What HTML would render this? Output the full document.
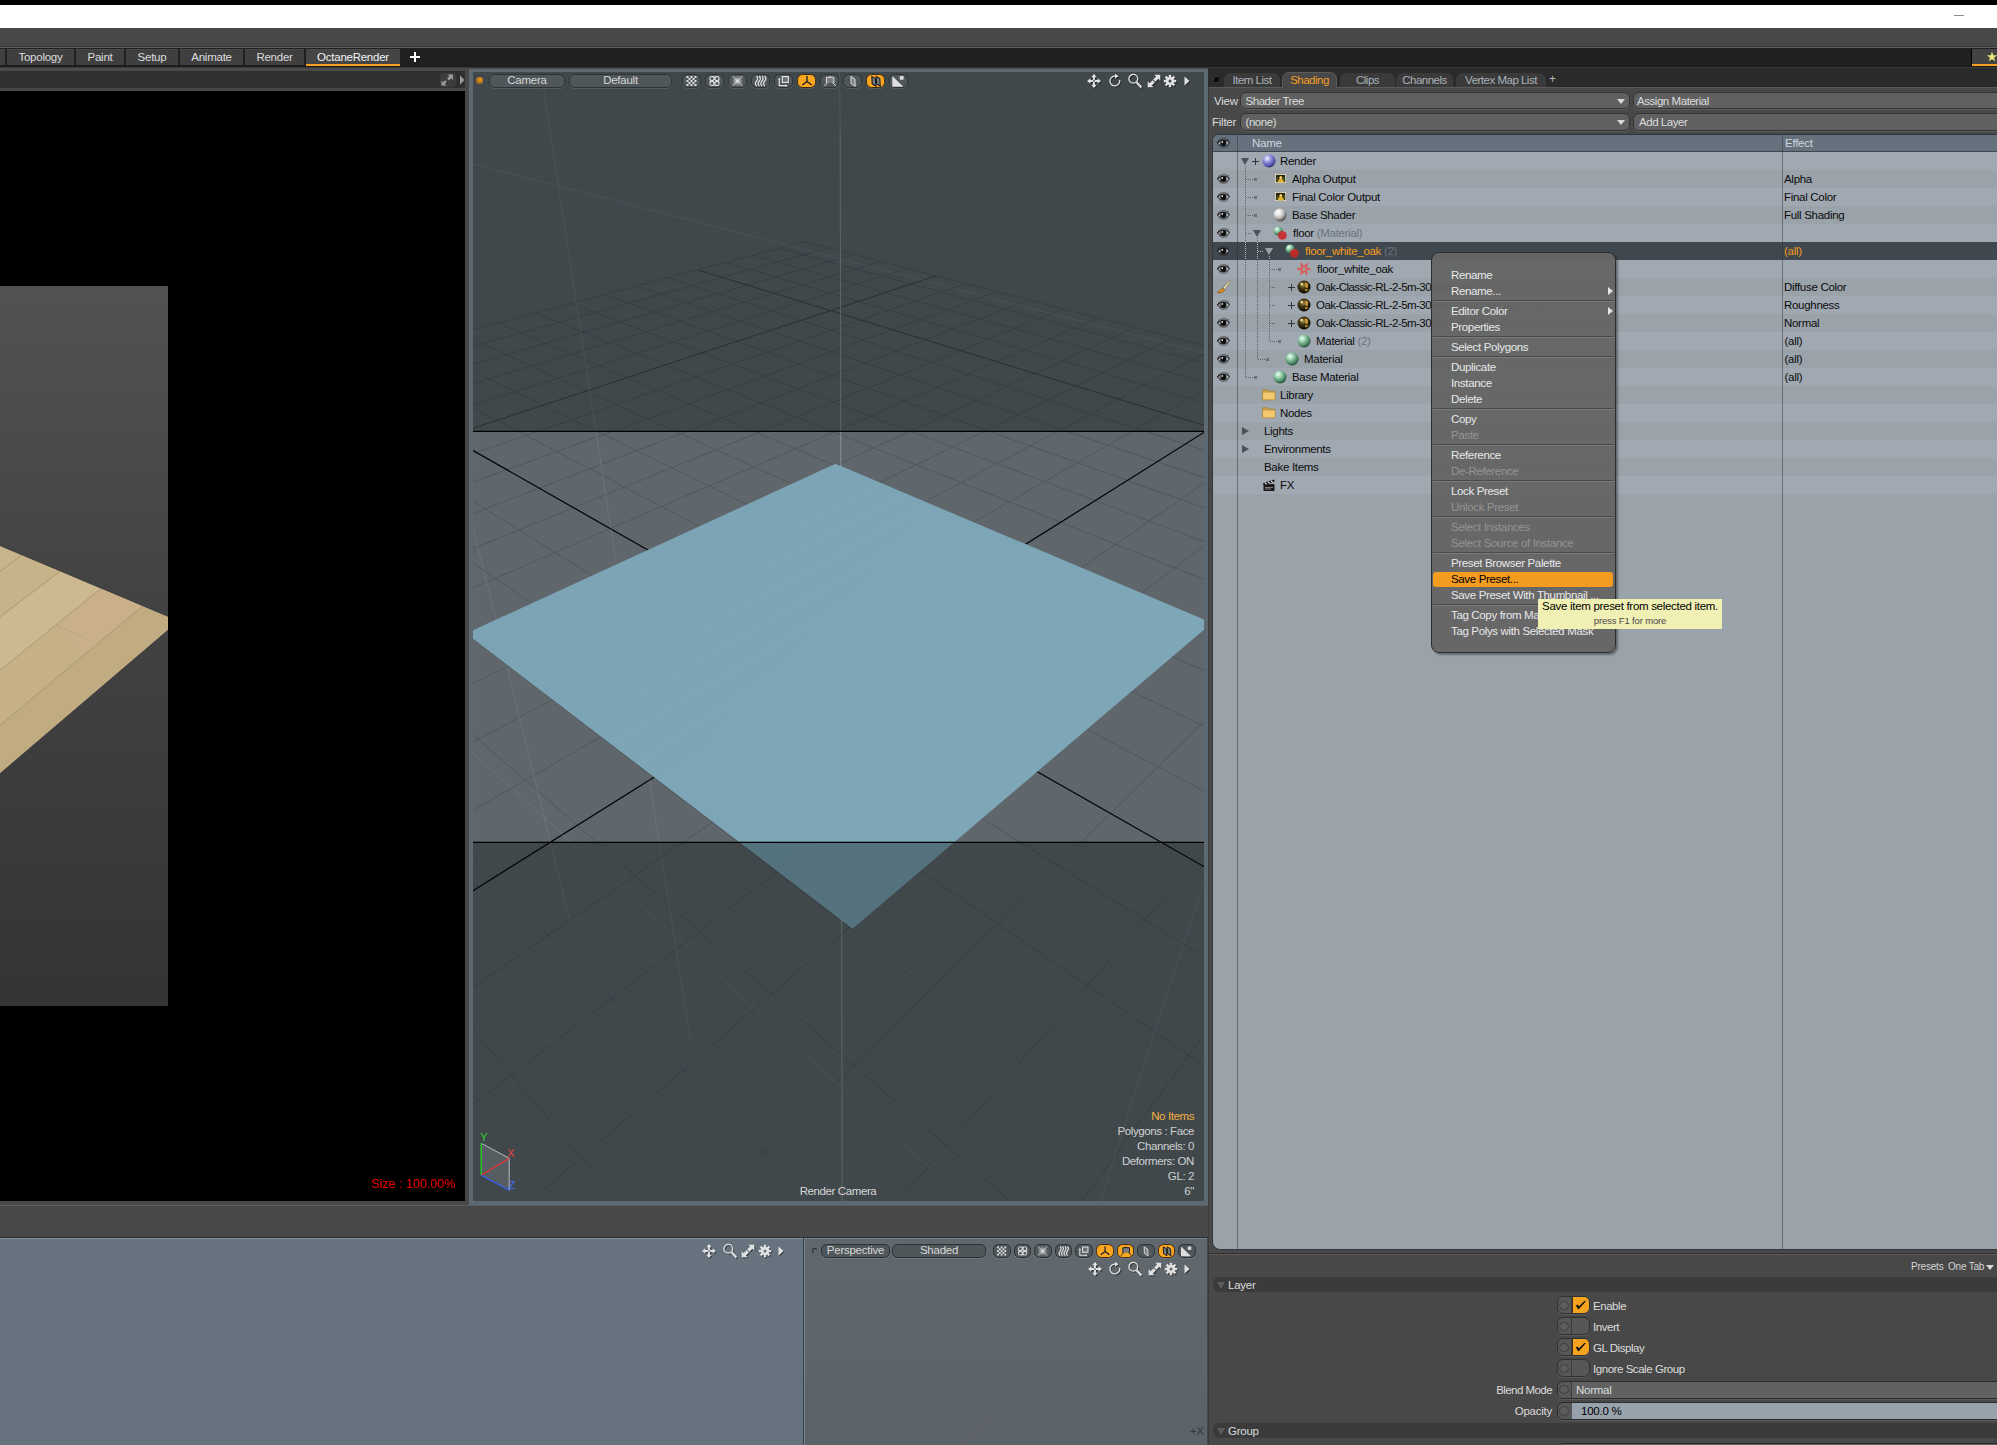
<!DOCTYPE html>
<html><head><meta charset="utf-8"><title>modo</title><style>
*{box-sizing:border-box;margin:0;padding:0}
html,body{width:1997px;height:1445px;overflow:hidden;background:#484848}
body{position:relative;font-family:"Liberation Sans",sans-serif;font-size:12px;color:#d8d8d8;line-height:1}
.a{position:absolute}
.t{position:absolute;white-space:nowrap;letter-spacing:-0.35px}
svg{position:absolute;overflow:visible}
.pill{position:absolute;border-radius:5.5px;background:#50575b;border:1px solid #2b3134;box-shadow:0 1px 0 rgba(255,255,255,.10)}
.pill.on{background:#fca521;border-color:#3a2a10}
.dd{position:absolute;height:17.6px;border-radius:6px;background:#606060;border:1px solid #343434;box-shadow:0 1px 0 rgba(255,255,255,.12)}
.row{position:absolute;left:1238px;width:759px;height:18px}
.mi{position:absolute;left:1451px;white-space:nowrap;letter-spacing:-0.3px;font-size:12px;color:#e6e6e6}
.mi.dis{color:#9a9a9a}
.sep{position:absolute;left:1433px;width:181px;height:2px;border-top:1px solid #4a4a4a;border-bottom:1px solid #7a7a7a}
.cb{position:absolute;left:1556.5px;width:33px;height:18px;border-radius:6px;background:#575757;border:1px solid #303030;box-shadow:0 1px 0 rgba(255,255,255,.10)}
.hdr{position:absolute;left:1213.3px;width:790px;height:15.3px;border-radius:6px;background:#3b3b3b}
</style></head><body>
<div class="a" style="left:0px;top:0px;width:1997px;height:5px;background:#000;"></div>
<div class="a" style="left:0px;top:5px;width:1997px;height:23px;background:#fff;"></div>
<div class="a" style="left:1954px;top:15px;width:10px;height:1px;background:#8a8a8a;"></div>
<div class="a" style="left:0px;top:28px;width:1997px;height:18px;background:#484848;"></div>
<div class="a" style="left:0px;top:46px;width:1997px;height:2px;background:#5e5e5e;border-top:1px solid #3a3a3a;"></div>
<div class="a" style="left:0px;top:48px;width:1997px;height:19px;background:#202020;"></div>
<div class="a" style="left:0px;top:49px;width:5px;height:16px;background:#3f3f3f;border-top:1px solid #4a4a4a;"></div>
<div class="a" style="left:7px;top:49px;width:67px;height:16px;background:#3f3f3f;border-top:1px solid #4a4a4a;"></div>
<div class="t" style="left:7px;width:67px;text-align:center;top:52px;font-size:11.5px;letter-spacing:-0.25px;color:#dcdcdc">Topology</div>
<div class="a" style="left:76px;top:49px;width:48px;height:16px;background:#3f3f3f;border-top:1px solid #4a4a4a;"></div>
<div class="t" style="left:76px;width:48px;text-align:center;top:52px;font-size:11.5px;letter-spacing:-0.25px;color:#dcdcdc">Paint</div>
<div class="a" style="left:126px;top:49px;width:52px;height:16px;background:#3f3f3f;border-top:1px solid #4a4a4a;"></div>
<div class="t" style="left:126px;width:52px;text-align:center;top:52px;font-size:11.5px;letter-spacing:-0.25px;color:#dcdcdc">Setup</div>
<div class="a" style="left:180px;top:49px;width:63px;height:16px;background:#3f3f3f;border-top:1px solid #4a4a4a;"></div>
<div class="t" style="left:180px;width:63px;text-align:center;top:52px;font-size:11.5px;letter-spacing:-0.25px;color:#dcdcdc">Animate</div>
<div class="a" style="left:245px;top:49px;width:59px;height:16px;background:#3f3f3f;border-top:1px solid #4a4a4a;"></div>
<div class="t" style="left:245px;width:59px;text-align:center;top:52px;font-size:11.5px;letter-spacing:-0.25px;color:#dcdcdc">Render</div>
<div class="a" style="left:306px;top:49px;width:94px;height:15px;background:#454545;border-top:1px solid #4a4a4a;"></div>
<div class="t" style="left:306px;width:94px;text-align:center;top:52px;font-size:11.5px;letter-spacing:-0.25px;color:#f2f2f2">OctaneRender</div>
<div class="a" style="left:306px;top:64px;width:94px;height:2.2px;background:#f5a01f;"></div>
<div class="a" style="left:410px;top:56px;width:10px;height:2px;background:#fff;"></div>
<div class="a" style="left:414px;top:52px;width:2px;height:10px;background:#fff;"></div>
<div class="a" style="left:1971px;top:49px;width:1px;height:17px;background:#000;"></div>
<div class="a" style="left:1972px;top:49px;width:25px;height:15px;background:#434343;"></div>
<div class="a" style="left:1972px;top:64px;width:25px;height:2.2px;background:#f5a01f;"></div>
<svg style="left:1991.8px;top:57.2px" width="1" height="1"><polygon points="0.00,-5.40 1.29,-1.78 5.14,-1.67 2.09,0.68 3.17,4.37 0.00,2.20 -3.17,4.37 -2.09,0.68 -5.14,-1.67 -1.29,-1.78" fill="#e6e67c"/></svg>
<div class="a" style="left:0px;top:66px;width:1997px;height:1px;background:#1c1c1c;"></div>
<div class="a" style="left:0px;top:67px;width:1997px;height:1px;background:#3a3a3a;"></div>
<div class="a" style="left:0px;top:68px;width:469px;height:3px;background:#4a4a4a;"></div>
<div class="a" style="left:0px;top:71px;width:465px;height:17px;background:#303030;"></div>
<div class="a" style="left:0px;top:88px;width:469px;height:3px;background:#484848;"></div>
<div class="a" style="left:465px;top:68px;width:4px;height:1137px;background:#484848;"></div>
<div class="a" style="left:0px;top:91px;width:465px;height:1110px;background:#000;"></div>
<div class="a" style="left:0px;top:1201px;width:469px;height:4px;background:#484848;"></div>
<svg style="left:440px;top:73px" width="28" height="14" viewBox="0 0 28 14">
<rect x="0" y="0" width="16" height="14" rx="4" fill="#3c3c3c"/>
<path d="M7.5 1.5h5.5v5.5l-1.8-1.8-2.2 2.2-1.9-1.9 2.2-2.2zM1.5 12.5v-5l1.7 1.7 2-2 1.6 1.6-2 2 1.7 1.7z" fill="#9a9a9a"/>
<path d="M20 2.5l4.5 4.5-4.5 4.5z" fill="#9a9a9a"/></svg>
<svg style="left:0;top:286px" width="168" height="720" viewBox="0 0 168 720">
<defs><linearGradient id="rg" x1="0" y1="0" x2="0" y2="1"><stop offset="0" stop-color="#525252"/><stop offset="0.45" stop-color="#424242"/><stop offset="1" stop-color="#343434"/></linearGradient>
<linearGradient id="wd" x1="0" y1="0" x2="1" y2="0.3"><stop offset="0" stop-color="#b9a47e"/><stop offset="1" stop-color="#c4ae86"/></linearGradient></defs>
<rect width="168" height="720" fill="url(#rg)"/>
<polygon points="0,260.2 168,331 168,343.5 0,487" fill="#c5b086"/>
<polygon points="0,260.2 21.3,269.2 0,285.4" fill="#c9b58b"/>
<polygon points="0,285.4 21.3,269.2 60,285.5 0,330.9" fill="#c7b389"/>
<polygon points="0,330.9 60,285.5 100.8,302.7 0,384.2" fill="#ccb990"/>
<polygon points="0,384.2 100.8,302.7 142.4,320.2 0,439.4" fill="#c6b187"/>
<polygon points="56.2,339.6 100.8,302.7 142.4,320.2 83.3,371" fill="#c9b088"/>
<polygon points="0,439.4 142.4,320.2 168,331 168,343.5 0,487" fill="#c1ac82"/>
<g stroke="#8f7f5e" stroke-width="0.6" opacity="0.8">
<line x1="0" y1="285.4" x2="21.3" y2="269.2"/><line x1="0" y1="330.9" x2="60" y2="285.5"/><line x1="0" y1="384.2" x2="100.8" y2="302.7"/><line x1="0" y1="439.4" x2="142.4" y2="320.2"/>
<line x1="56.2" y1="339.6" x2="83.3" y2="351.2" opacity="0.5"/>
</g></svg>
<div class="t" style="left:371px;top:1178px;color:#e00000;font-size:12.5px;letter-spacing:0;">Size : 100.00%</div>
<div class="a" style="left:469px;top:69px;width:739px;height:1136px;background:#5c6973;"></div>
<svg style="left:473px;top:72px" width="731" height="1129" viewBox="0 0 731 1129"><defs><clipPath id="vc"><rect width="731" height="1129"/></clipPath><linearGradient id="pg" x1="0" y1="0" x2="1" y2="0.6"><stop offset="0" stop-color="#7ba3b3"/><stop offset="1" stop-color="#7ea7b7"/></linearGradient></defs><g clip-path="url(#vc)"><rect width="731" height="1129" fill="#5f676d"/><path d="M4949.2 6079.1L1960.1 592.3M4064.5 6076.2L1841.8 561.6M3179.7 6073.4L1732.8 533.3M2295.0 6070.6L1631.9 507.2M1410.2 6067.8L1538.4 482.9M-359.3 6062.1L1370.2 439.3M-1244.0 6059.3L1294.4 419.6M-2128.8 6056.5L1223.3 401.2M-3013.5 6053.6L1156.7 383.9M-2779.1 4776.8L1093.9 367.6M-2378.3 3693.8L1034.9 352.3M-2121.7 3000.3L979.1 337.8M-1943.3 2518.2L926.4 324.1M-1812.0 2163.6L876.4 311.2M-1631.9 1676.9L784.2 287.2M-1567.5 1502.7L741.4 276.1M-1514.1 1358.6L700.8 265.6M-1469.3 1237.5L662.0 255.5M-1431.1 1134.2L625.0 245.9M-1398.1 1045.1L589.7 236.8M-1369.4 967.5L555.9 228.0M-1344.1 899.2L523.6 219.6M-1321.7 838.8L492.6 211.6M-1283.8 736.3L434.4 196.5M-1267.6 692.6L407.0 189.4M-1253.0 652.9L380.7 182.5M-1239.6 616.7L355.4 176.0M-1227.3 583.7L331.0 169.6M-3251.4 6052.9L-1227.3 583.7M-2302.0 6055.9L-1106.2 551.5M-1352.5 6058.9L-995.2 522.0M-403.1 6062.0L-893.1 494.9M1495.8 6068.0L-711.6 446.6M2445.2 6071.1L-630.6 425.1M3394.6 6074.1L-555.2 405.1M4344.1 6077.1L-484.8 386.4M4538.7 5325.5L-419.0 368.9M3792.3 3955.4L-357.3 352.5M3344.4 3133.3L-299.3 337.1M3045.8 2585.2L-244.8 322.6M2832.6 2193.8L-193.3 308.9M2548.2 1671.8L-98.8 283.8M2448.7 1489.1L-55.3 272.3M2367.3 1339.7L-14.0 261.3M2299.4 1215.1L25.2 250.9M2242.0 1109.7L62.5 241.0M2192.8 1019.4L98.0 231.5M2150.1 941.1L131.9 222.5M2112.8 872.6L164.2 214.0M2079.9 812.1L195.1 205.7M2024.4 710.3L253.0 190.4M2000.9 667.1L280.1 183.2M1979.5 627.9L306.1 176.3M1960.1 592.3L331.0 169.6" stroke="#50585d" stroke-width="1" fill="none"/><path d="M525.5 6064.9L1451.3 460.3M-1301.8 784.8L462.9 203.9M546.3 6065.0L-798.9 469.8M2050.6 758.4L224.7 197.9" stroke="#3a4145" stroke-width="1" fill="none"/><path d="M-1711.5 1891.8L829.1 298.9M2672.6 1900.2L-144.8 296.0" stroke="#000" stroke-width="1.2" fill="none"/><line x1="367.20000000000005" y1="58" x2="369.20000000000005" y2="1129" stroke="#8d9396" stroke-width="1"/><line x1="366.6" y1="0" x2="367.20000000000005" y2="58" stroke="#8d9396" stroke-width="1" opacity="0.45"/><polygon points="-7.0,561.5 362.5,391.8 739.0,551.0 379.5,856.7" fill="url(#pg)"/><path d="M386.0 401.8L17.2 580.0M409.6 411.7L41.3 598.4M433.1 421.7L65.5 616.9M456.6 431.6L89.6 635.3M480.2 441.5L113.8 653.8M503.7 451.5L137.9 672.2M527.2 461.5L162.1 690.7M550.8 471.4L186.2 709.1M574.3 481.4L210.4 727.5M597.8 491.3L234.6 746.0M621.3 501.2L258.7 764.5M644.9 511.2L282.9 782.9M668.4 521.1L307.0 801.4M691.9 531.1L331.2 819.8M715.5 541.0L355.3 838.2" stroke="#8ec0d6" stroke-width="0.7" stroke-dasharray="2 2" opacity="0.45" fill="none"/><line x1="367.79999999999995" y1="392" x2="368.6" y2="853" stroke="#9aa9ae" stroke-width="1" opacity="0.16"/><path d="M70.7 18.0L143.0 490.0M0.0 92.0L731.0 281.0M0.0 456.0L23.0 547.0M32.4 587.7L97.5 852.0M176.0 706.0L218.0 972.0M1.0 682.0L492.0 1128.0M381.0 858.0L730.0 1128.0M731.0 808.0L627.0 1129.0" stroke="#9aa4aa" stroke-width="1" opacity="0.22" fill="none"/><rect x="0" y="0" width="731" height="359" fill="rgba(2,11,11,0.335)"/><rect x="0" y="770.5" width="731" height="358.5" fill="rgba(2,11,11,0.335)"/><rect x="0" y="358.75" width="731" height="1.25" fill="#000"/><rect x="0" y="769.7" width="731" height="1.3" fill="#000"/></g><polygon points="8.199999999999989,1103.3 8.199999999999989,1071.3 36.19999999999999,1086.3 36.19999999999999,1118.3" fill="#5a6064" opacity="0.9"/><path d="M8.199999999999989 1071.3L36.19999999999999 1086.3V1118.3" stroke="#b8bcbe" stroke-width="1" fill="none"/><line x1="8.199999999999989" y1="1103.3" x2="8.199999999999989" y2="1071.3" stroke="#20e020" stroke-width="1.2"/><line x1="8.199999999999989" y1="1103.3" x2="36.19999999999999" y2="1086.3" stroke="#f03030" stroke-width="1.2"/><line x1="8.199999999999989" y1="1103.3" x2="36.19999999999999" y2="1118.3" stroke="#3060ff" stroke-width="1.2"/></svg>
<div class="t" style="left:480.3px;top:1131.6px;color:#30d030;font-size:11px;letter-spacing:0;">Y</div>
<div class="t" style="left:507.2px;top:1147.6px;color:#f04040;font-size:11px;letter-spacing:0;">X</div>
<div class="t" style="left:508.6px;top:1179.7px;color:#4070ff;font-size:11px;letter-spacing:0;">Z</div>
<div class="a" style="left:476.3px;top:77.3px;width:6.6px;height:6.6px;border-radius:50%;background:radial-gradient(circle at 60% 35%,#e89a28,#8a5210)"></div>
<div class="pill" style="left:489px;top:74px;width:76px;height:14px"></div>
<div class="t" style="left:489px;width:76px;text-align:center;top:75px;font-size:11.5px;letter-spacing:-0.25px;color:#d6d6d6">Camera</div>
<div class="pill" style="left:569px;top:74px;width:103px;height:14px"></div>
<div class="t" style="left:569px;width:103px;text-align:center;top:75px;font-size:11.5px;letter-spacing:-0.25px;color:#d6d6d6">Default</div>
<div class="pill" style="left:682px;top:74px;width:19.4px;height:14.4px"></div>
<svg style="left:682px;top:74px" width="19.4" height="14.4" viewBox="0 0 19.4 14.4"><rect x="4.5" y="2" width="2" height="2" fill="#dedede"/><rect x="8.5" y="2" width="2" height="2" fill="#dedede"/><rect x="12.5" y="2" width="2" height="2" fill="#dedede"/><rect x="6.5" y="4" width="2" height="2" fill="#dedede"/><rect x="10.5" y="4" width="2" height="2" fill="#dedede"/><rect x="4.5" y="6" width="2" height="2" fill="#dedede"/><rect x="8.5" y="6" width="2" height="2" fill="#dedede"/><rect x="12.5" y="6" width="2" height="2" fill="#dedede"/><rect x="6.5" y="8" width="2" height="2" fill="#dedede"/><rect x="10.5" y="8" width="2" height="2" fill="#dedede"/><rect x="4.5" y="10" width="2" height="2" fill="#dedede"/><rect x="8.5" y="10" width="2" height="2" fill="#dedede"/><rect x="12.5" y="10" width="2" height="2" fill="#dedede"/></svg>
<div class="pill" style="left:705px;top:74px;width:19.4px;height:14.4px"></div>
<svg style="left:705px;top:74px" width="19.4" height="14.4" viewBox="0 0 19.4 14.4"><rect x="4.5" y="2" width="10" height="10" rx="2.2" fill="#dedede"/><circle cx="7" cy="4.5" r="1.55" fill="#50575b"/><circle cx="12" cy="4.5" r="1.55" fill="#50575b"/><circle cx="7" cy="9.5" r="1.55" fill="#50575b"/><circle cx="12" cy="9.5" r="1.55" fill="#50575b"/><circle cx="9.5" cy="7" r="0.9" fill="#50575b"/><circle cx="9.5" cy="2" r="0.7" fill="#50575b"/><circle cx="9.5" cy="12" r="0.7" fill="#50575b"/><circle cx="4.5" cy="7" r="0.7" fill="#50575b"/><circle cx="14.5" cy="7" r="0.7" fill="#50575b"/></svg>
<div class="pill" style="left:728px;top:74px;width:19.4px;height:14.4px"></div>
<svg style="left:728px;top:74px" width="19.4" height="14.4" viewBox="0 0 19.4 14.4"><defs><radialGradient id="xg"><stop offset="0" stop-color="#e8e8e8"/><stop offset="0.55" stop-color="#8e9396"/><stop offset="1" stop-color="#65696c"/></radialGradient></defs><rect x="4.5" y="2" width="10" height="10" fill="url(#xg)"/><path d="M4.5 2L14.5 12M14.5 2L4.5 12" stroke="#f0f0f0" stroke-width="0.9" opacity="0.75"/></svg>
<div class="pill" style="left:751px;top:74px;width:19.4px;height:14.4px"></div>
<svg style="left:751px;top:74px" width="19.4" height="14.4" viewBox="0 0 19.4 14.4"><g fill="none" stroke="#dedede" stroke-width="1.25"><path d="M5.6 2c1.6 1.8 1.6 3.2 0 5s-1.6 3.2 0 5.2"/><path d="M8.3 2c1.6 1.8 1.6 3.2 0 5s-1.6 3.2 0 5.2"/><path d="M11 2c1.6 1.8 1.6 3.2 0 5s-1.6 3.2 0 5.2"/><path d="M13.7 2c1.6 1.8 1.6 3.2 0 5s-1.6 3.2 0 5.2"/></g></svg>
<div class="pill" style="left:774px;top:74px;width:19.4px;height:14.4px"></div>
<svg style="left:774px;top:74px" width="19.4" height="14.4" viewBox="0 0 19.4 14.4"><rect x="8.3" y="2.6" width="6" height="5.8" fill="#6c7073" stroke="#dedede" stroke-width="1.2"/><path d="M5.3 4.5v7.2h7.2" fill="none" stroke="#dedede" stroke-width="1.2"/><path d="M11.5 10.2l2.2 1.5-2.2 1.3z" fill="#dedede"/><path d="M4 5.8l1.3-2 1.3 2z" fill="#dedede"/></svg>
<div class="pill on" style="left:797px;top:74px;width:19.4px;height:14.4px"></div>
<svg style="left:797px;top:74px" width="19.4" height="14.4" viewBox="0 0 19.4 14.4"><path d="M10 2v5.5M10 7.5L5.3 11M10 7.5L14.7 11" stroke="#16202c" stroke-width="1.35" fill="none"/></svg>
<div class="pill" style="left:820px;top:74px;width:19.4px;height:14.4px"></div>
<svg style="left:820px;top:74px" width="19.4" height="14.4" viewBox="0 0 19.4 14.4"><rect x="6.4" y="3.3" width="7.4" height="5.6" fill="#7c7c7c"/><path d="M6.4 3.3v5.6M13.8 3.3v5.6M6.4 3.3h7.4M10.1 2v1.6M7.6 8.4L4.4 12M12.6 8.4L15.8 12" stroke="#dedede" stroke-width="1" fill="none"/></svg>
<div class="pill" style="left:843px;top:74px;width:19.4px;height:14.4px"></div>
<svg style="left:843px;top:74px" width="19.4" height="14.4" viewBox="0 0 19.4 14.4"><path d="M7.9 2.4L11.9 5L12.2 12.3L8.1 9.6z" fill="#7e8285" stroke="#dedede" stroke-width="1"/></svg>
<div class="pill on" style="left:866px;top:74px;width:19.4px;height:14.4px"></div>
<svg style="left:866px;top:74px" width="19.4" height="14.4" viewBox="0 0 19.4 14.4"><path d="M5.8 2.4L9.4 4.6L9.9 12.2L6.2 9.9z" fill="#7a7a7a" stroke="#16202c" stroke-width="1.1"/><path d="M10.2 2.4L13.8 4.6L14.3 12.2L10.6 9.9z" fill="#7a7a7a" stroke="#16202c" stroke-width="1.1"/></svg>
<div class="pill" style="left:889px;top:74px;width:19.4px;height:14.4px"></div>
<svg style="left:889px;top:74px" width="19.4" height="14.4" viewBox="0 0 19.4 14.4"><path d="M3.3 2.1v10.7h11.1z" fill="#dedede"/><rect x="10.8" y="2.1" width="3.8" height="3.6" fill="#dedede"/></svg>
<svg style="left:1094px;top:81px" width="1" height="1"><g style="filter:drop-shadow(1px 1px 0 rgba(0,0,0,.45))"><path transform="scale(1.06)" d="M0 -6.5l2.6 3h-1.7v2.6h2.6v-1.7l3 2.6-3 2.6v-1.7h-2.6v2.6h1.7l-2.6 3-2.6-3h1.7v-2.6h-2.6v1.7l-3-2.6 3-2.6v1.7h2.6v-2.6h-1.7z" fill="#e2e2e2"/><rect x="-0.8" y="-0.8" width="1.6" height="1.6" fill="#40484c"/></g></svg>
<svg style="left:1114.5px;top:81px" width="1" height="1"><g style="filter:drop-shadow(1px 1px 0 rgba(0,0,0,.45))"><path d="M4.6 -1.2A4.9 4.9 0 1 1 0.3 -4.9" fill="none" stroke="#e2e2e2" stroke-width="1.3"/><path d="M0 -7.2l3.6 2.5-3.6 2.3z" fill="#e2e2e2"/></g></svg>
<svg style="left:1134.5px;top:81px" width="1" height="1"><g style="filter:drop-shadow(1px 1px 0 rgba(0,0,0,.45))"><circle cx="-1.7" cy="-2.2" r="4.4" fill="none" stroke="#e2e2e2" stroke-width="1.3"/><path d="M1.6 1.3l4.8 5.2" stroke="#e2e2e2" stroke-width="2"/></g></svg>
<svg style="left:1154px;top:81px" width="1" height="1"><g style="filter:drop-shadow(1px 1px 0 rgba(0,0,0,.45))"><path d="M6.3 -6.3H0.3L2.2 -4.4L-0.8 -1.4L1.4 0.8L4.4 -2.2L6.3 -0.3ZM-6.3 6.3H-0.3L-2.2 4.4L0.8 1.4L-1.4 -0.8L-4.4 2.2L-6.3 0.3Z" fill="#e2e2e2"/></g></svg>
<svg style="left:1170px;top:81px" width="1" height="1"><g style="filter:drop-shadow(1px 1px 0 rgba(0,0,0,.45))"><g fill="#e2e2e2"><circle r="4.1"/><rect x="-1.2" y="-6.2" width="2.4" height="3" transform="rotate(0)"/><rect x="-1.2" y="-6.2" width="2.4" height="3" transform="rotate(45)"/><rect x="-1.2" y="-6.2" width="2.4" height="3" transform="rotate(90)"/><rect x="-1.2" y="-6.2" width="2.4" height="3" transform="rotate(135)"/><rect x="-1.2" y="-6.2" width="2.4" height="3" transform="rotate(180)"/><rect x="-1.2" y="-6.2" width="2.4" height="3" transform="rotate(225)"/><rect x="-1.2" y="-6.2" width="2.4" height="3" transform="rotate(270)"/><rect x="-1.2" y="-6.2" width="2.4" height="3" transform="rotate(315)"/></g><circle r="1.5" fill="#40484c"/></g></svg>
<svg style="left:1186.5px;top:81px" width="1" height="1"><g style="filter:drop-shadow(1px 1px 0 rgba(0,0,0,.45))"><path d="M-2.5 -4.6l5 4.6-5 4.6z" fill="#e2e2e2"/></g></svg>
<div class="t" style="right:803px;top:1111px;color:#f0b040;font-size:11.5px;letter-spacing:-0.4px;">No Items</div>
<div class="t" style="right:803px;top:1126px;color:#d0d0d0;font-size:11.5px;letter-spacing:-0.4px;">Polygons : Face</div>
<div class="t" style="right:803px;top:1141px;color:#d0d0d0;font-size:11.5px;letter-spacing:-0.4px;">Channels: 0</div>
<div class="t" style="right:803px;top:1156px;color:#d0d0d0;font-size:11.5px;letter-spacing:-0.4px;">Deformers: ON</div>
<div class="t" style="right:803px;top:1171px;color:#d0d0d0;font-size:11.5px;letter-spacing:-0.4px;">GL: 2</div>
<div class="t" style="right:803px;top:1186px;color:#d0d0d0;font-size:11.5px;letter-spacing:-0.4px;">6&quot;</div>
<div class="t" style="left:738px;width:200px;text-align:center;top:1186px;font-size:11.5px;letter-spacing:-0.4px;color:#d6d6d6">Render Camera</div>
<div class="a" style="left:0px;top:1205px;width:1208px;height:1px;background:#5c5c5c;"></div>
<div class="a" style="left:0px;top:1206px;width:1208px;height:31px;background:#484848;"></div>
<div class="a" style="left:0px;top:1237px;width:1208px;height:1px;background:#2e2e2e;"></div>
<div class="a" style="left:0px;top:1238px;width:803px;height:207px;background:#66727e;border-top:1px solid #8792a0;"></div>
<div class="a" style="left:803px;top:1238px;width:1px;height:207px;background:#3a4248;"></div>
<div class="a" style="left:804px;top:1238px;width:403px;height:207px;background:linear-gradient(#60686e,#5b6268);border-top:1px solid #7a848c;border-left:1px solid #76828c;"></div>
<svg style="left:708.6px;top:1251px" width="1" height="1"><g style="filter:drop-shadow(1px 1px 0 rgba(0,0,0,.45))"><path transform="scale(1.06)" d="M0 -6.5l2.6 3h-1.7v2.6h2.6v-1.7l3 2.6-3 2.6v-1.7h-2.6v2.6h1.7l-2.6 3-2.6-3h1.7v-2.6h-2.6v1.7l-3-2.6 3-2.6v1.7h2.6v-2.6h-1.7z" fill="#e2e2e2"/><rect x="-0.8" y="-0.8" width="1.6" height="1.6" fill="#66727e"/></g></svg>
<svg style="left:730.0px;top:1251px" width="1" height="1"><g style="filter:drop-shadow(1px 1px 0 rgba(0,0,0,.45))"><circle cx="-1.7" cy="-2.2" r="4.4" fill="none" stroke="#e2e2e2" stroke-width="1.3"/><path d="M1.6 1.3l4.8 5.2" stroke="#e2e2e2" stroke-width="2"/></g></svg>
<svg style="left:748.3000000000001px;top:1251px" width="1" height="1"><g style="filter:drop-shadow(1px 1px 0 rgba(0,0,0,.45))"><path d="M6.3 -6.3H0.3L2.2 -4.4L-0.8 -1.4L1.4 0.8L4.4 -2.2L6.3 -0.3ZM-6.3 6.3H-0.3L-2.2 4.4L0.8 1.4L-1.4 -0.8L-4.4 2.2L-6.3 0.3Z" fill="#e2e2e2"/></g></svg>
<svg style="left:764.8000000000001px;top:1251px" width="1" height="1"><g style="filter:drop-shadow(1px 1px 0 rgba(0,0,0,.45))"><g fill="#e2e2e2"><circle r="4.1"/><rect x="-1.2" y="-6.2" width="2.4" height="3" transform="rotate(0)"/><rect x="-1.2" y="-6.2" width="2.4" height="3" transform="rotate(45)"/><rect x="-1.2" y="-6.2" width="2.4" height="3" transform="rotate(90)"/><rect x="-1.2" y="-6.2" width="2.4" height="3" transform="rotate(135)"/><rect x="-1.2" y="-6.2" width="2.4" height="3" transform="rotate(180)"/><rect x="-1.2" y="-6.2" width="2.4" height="3" transform="rotate(225)"/><rect x="-1.2" y="-6.2" width="2.4" height="3" transform="rotate(270)"/><rect x="-1.2" y="-6.2" width="2.4" height="3" transform="rotate(315)"/></g><circle r="1.5" fill="#66727e"/></g></svg>
<svg style="left:781.3000000000001px;top:1251px" width="1" height="1"><g style="filter:drop-shadow(1px 1px 0 rgba(0,0,0,.45))"><path d="M-2.5 -4.6l5 4.6-5 4.6z" fill="#e2e2e2"/></g></svg>
<div class="a" style="left:812px;top:1248px;width:6px;height:6px;border-radius:50%;border:1.5px solid #2a2f33;border-right-color:transparent;border-bottom-color:transparent"></div>
<div class="pill" style="left:821px;top:1244px;width:69px;height:14px"></div>
<div class="t" style="left:821px;width:69px;text-align:center;top:1245px;font-size:11.5px;letter-spacing:-0.25px;color:#d6d6d6">Perspective</div>
<div class="pill" style="left:892px;top:1244px;width:94px;height:14px"></div>
<div class="t" style="left:892px;width:94px;text-align:center;top:1245px;font-size:11.5px;letter-spacing:-0.25px;color:#d6d6d6">Shaded</div>
<div class="pill" style="left:993.0px;top:1244px;width:17.6px;height:14.4px"></div>
<svg style="left:993.0px;top:1244px" width="17.6" height="14.4" viewBox="0 0 19.4 14.4"><rect x="4.5" y="2" width="2" height="2" fill="#dedede"/><rect x="8.5" y="2" width="2" height="2" fill="#dedede"/><rect x="12.5" y="2" width="2" height="2" fill="#dedede"/><rect x="6.5" y="4" width="2" height="2" fill="#dedede"/><rect x="10.5" y="4" width="2" height="2" fill="#dedede"/><rect x="4.5" y="6" width="2" height="2" fill="#dedede"/><rect x="8.5" y="6" width="2" height="2" fill="#dedede"/><rect x="12.5" y="6" width="2" height="2" fill="#dedede"/><rect x="6.5" y="8" width="2" height="2" fill="#dedede"/><rect x="10.5" y="8" width="2" height="2" fill="#dedede"/><rect x="4.5" y="10" width="2" height="2" fill="#dedede"/><rect x="8.5" y="10" width="2" height="2" fill="#dedede"/><rect x="12.5" y="10" width="2" height="2" fill="#dedede"/></svg>
<div class="pill" style="left:1013.6px;top:1244px;width:17.6px;height:14.4px"></div>
<svg style="left:1013.6px;top:1244px" width="17.6" height="14.4" viewBox="0 0 19.4 14.4"><rect x="4.5" y="2" width="10" height="10" rx="2.2" fill="#dedede"/><circle cx="7" cy="4.5" r="1.55" fill="#50575b"/><circle cx="12" cy="4.5" r="1.55" fill="#50575b"/><circle cx="7" cy="9.5" r="1.55" fill="#50575b"/><circle cx="12" cy="9.5" r="1.55" fill="#50575b"/><circle cx="9.5" cy="7" r="0.9" fill="#50575b"/><circle cx="9.5" cy="2" r="0.7" fill="#50575b"/><circle cx="9.5" cy="12" r="0.7" fill="#50575b"/><circle cx="4.5" cy="7" r="0.7" fill="#50575b"/><circle cx="14.5" cy="7" r="0.7" fill="#50575b"/></svg>
<div class="pill" style="left:1034.2px;top:1244px;width:17.6px;height:14.4px"></div>
<svg style="left:1034.2px;top:1244px" width="17.6" height="14.4" viewBox="0 0 19.4 14.4"><defs><radialGradient id="xg"><stop offset="0" stop-color="#e8e8e8"/><stop offset="0.55" stop-color="#8e9396"/><stop offset="1" stop-color="#65696c"/></radialGradient></defs><rect x="4.5" y="2" width="10" height="10" fill="url(#xg)"/><path d="M4.5 2L14.5 12M14.5 2L4.5 12" stroke="#f0f0f0" stroke-width="0.9" opacity="0.75"/></svg>
<div class="pill" style="left:1054.8px;top:1244px;width:17.6px;height:14.4px"></div>
<svg style="left:1054.8px;top:1244px" width="17.6" height="14.4" viewBox="0 0 19.4 14.4"><g fill="none" stroke="#dedede" stroke-width="1.25"><path d="M5.6 2c1.6 1.8 1.6 3.2 0 5s-1.6 3.2 0 5.2"/><path d="M8.3 2c1.6 1.8 1.6 3.2 0 5s-1.6 3.2 0 5.2"/><path d="M11 2c1.6 1.8 1.6 3.2 0 5s-1.6 3.2 0 5.2"/><path d="M13.7 2c1.6 1.8 1.6 3.2 0 5s-1.6 3.2 0 5.2"/></g></svg>
<div class="pill" style="left:1075.4px;top:1244px;width:17.6px;height:14.4px"></div>
<svg style="left:1075.4px;top:1244px" width="17.6" height="14.4" viewBox="0 0 19.4 14.4"><rect x="8.3" y="2.6" width="6" height="5.8" fill="#6c7073" stroke="#dedede" stroke-width="1.2"/><path d="M5.3 4.5v7.2h7.2" fill="none" stroke="#dedede" stroke-width="1.2"/><path d="M11.5 10.2l2.2 1.5-2.2 1.3z" fill="#dedede"/><path d="M4 5.8l1.3-2 1.3 2z" fill="#dedede"/></svg>
<div class="pill on" style="left:1096.0px;top:1244px;width:17.6px;height:14.4px"></div>
<svg style="left:1096.0px;top:1244px" width="17.6" height="14.4" viewBox="0 0 19.4 14.4"><path d="M10 2v5.5M10 7.5L5.3 11M10 7.5L14.7 11" stroke="#16202c" stroke-width="1.35" fill="none"/></svg>
<div class="pill on" style="left:1116.6px;top:1244px;width:17.6px;height:14.4px"></div>
<svg style="left:1116.6px;top:1244px" width="17.6" height="14.4" viewBox="0 0 19.4 14.4"><rect x="6.4" y="3.3" width="7.4" height="5.6" fill="#7c7c7c"/><path d="M6.4 3.3v5.6M13.8 3.3v5.6M6.4 3.3h7.4M10.1 2v1.6M7.6 8.4L4.4 12M12.6 8.4L15.8 12" stroke="#16202c" stroke-width="1" fill="none"/></svg>
<div class="pill" style="left:1137.2px;top:1244px;width:17.6px;height:14.4px"></div>
<svg style="left:1137.2px;top:1244px" width="17.6" height="14.4" viewBox="0 0 19.4 14.4"><path d="M7.9 2.4L11.9 5L12.2 12.3L8.1 9.6z" fill="#7e8285" stroke="#dedede" stroke-width="1"/></svg>
<div class="pill on" style="left:1157.8px;top:1244px;width:17.6px;height:14.4px"></div>
<svg style="left:1157.8px;top:1244px" width="17.6" height="14.4" viewBox="0 0 19.4 14.4"><path d="M5.8 2.4L9.4 4.6L9.9 12.2L6.2 9.9z" fill="#7a7a7a" stroke="#16202c" stroke-width="1.1"/><path d="M10.2 2.4L13.8 4.6L14.3 12.2L10.6 9.9z" fill="#7a7a7a" stroke="#16202c" stroke-width="1.1"/></svg>
<div class="pill" style="left:1178.4px;top:1244px;width:17.6px;height:14.4px"></div>
<svg style="left:1178.4px;top:1244px" width="17.6" height="14.4" viewBox="0 0 19.4 14.4"><path d="M3.3 2.1v10.7h11.1z" fill="#dedede"/><rect x="10.8" y="2.1" width="3.8" height="3.6" fill="#dedede"/></svg>
<svg style="left:1094.6px;top:1269px" width="1" height="1"><g style="filter:drop-shadow(1px 1px 0 rgba(0,0,0,.45))"><path transform="scale(1.06)" d="M0 -6.5l2.6 3h-1.7v2.6h2.6v-1.7l3 2.6-3 2.6v-1.7h-2.6v2.6h1.7l-2.6 3-2.6-3h1.7v-2.6h-2.6v1.7l-3-2.6 3-2.6v1.7h2.6v-2.6h-1.7z" fill="#e2e2e2"/><rect x="-0.8" y="-0.8" width="1.6" height="1.6" fill="#5f676d"/></g></svg>
<svg style="left:1115.1px;top:1269px" width="1" height="1"><g style="filter:drop-shadow(1px 1px 0 rgba(0,0,0,.45))"><path d="M4.6 -1.2A4.9 4.9 0 1 1 0.3 -4.9" fill="none" stroke="#e2e2e2" stroke-width="1.3"/><path d="M0 -7.2l3.6 2.5-3.6 2.3z" fill="#e2e2e2"/></g></svg>
<svg style="left:1135.1px;top:1269px" width="1" height="1"><g style="filter:drop-shadow(1px 1px 0 rgba(0,0,0,.45))"><circle cx="-1.7" cy="-2.2" r="4.4" fill="none" stroke="#e2e2e2" stroke-width="1.3"/><path d="M1.6 1.3l4.8 5.2" stroke="#e2e2e2" stroke-width="2"/></g></svg>
<svg style="left:1154.6px;top:1269px" width="1" height="1"><g style="filter:drop-shadow(1px 1px 0 rgba(0,0,0,.45))"><path d="M6.3 -6.3H0.3L2.2 -4.4L-0.8 -1.4L1.4 0.8L4.4 -2.2L6.3 -0.3ZM-6.3 6.3H-0.3L-2.2 4.4L0.8 1.4L-1.4 -0.8L-4.4 2.2L-6.3 0.3Z" fill="#e2e2e2"/></g></svg>
<svg style="left:1170.6px;top:1269px" width="1" height="1"><g style="filter:drop-shadow(1px 1px 0 rgba(0,0,0,.45))"><g fill="#e2e2e2"><circle r="4.1"/><rect x="-1.2" y="-6.2" width="2.4" height="3" transform="rotate(0)"/><rect x="-1.2" y="-6.2" width="2.4" height="3" transform="rotate(45)"/><rect x="-1.2" y="-6.2" width="2.4" height="3" transform="rotate(90)"/><rect x="-1.2" y="-6.2" width="2.4" height="3" transform="rotate(135)"/><rect x="-1.2" y="-6.2" width="2.4" height="3" transform="rotate(180)"/><rect x="-1.2" y="-6.2" width="2.4" height="3" transform="rotate(225)"/><rect x="-1.2" y="-6.2" width="2.4" height="3" transform="rotate(270)"/><rect x="-1.2" y="-6.2" width="2.4" height="3" transform="rotate(315)"/></g><circle r="1.5" fill="#5f676d"/></g></svg>
<svg style="left:1187.1px;top:1269px" width="1" height="1"><g style="filter:drop-shadow(1px 1px 0 rgba(0,0,0,.45))"><path d="M-2.5 -4.6l5 4.6-5 4.6z" fill="#e2e2e2"/></g></svg>
<div class="t" style="left:1190px;top:1426px;color:#30383e;font-size:11px;letter-spacing:0;">+X</div>
<svg style="left:0;top:0" width="1997" height="1445"><line x1="959.5" y1="1445" x2="992" y2="1415" stroke="#96605a" stroke-width="1" opacity="0.4"/><line x1="992" y1="1415" x2="1010" y2="1398" stroke="#96605a" stroke-width="1" opacity="0.15"/></svg>
<div class="a" style="left:1208px;top:68px;width:789px;height:19px;background:#2b2b2b;"></div>
<div class="a" style="left:1208px;top:87px;width:789px;height:1358px;background:#484848;"></div>
<div class="a" style="left:1209px;top:87px;width:788px;height:1px;background:#5a5a5a;"></div>
<div class="a" style="left:1208px;top:87px;width:1px;height:1358px;background:#3a3a3a;"></div>
<div class="a" style="left:1213px;top:76px;width:6px;height:6px;border-radius:50%;background:#0a0a0a;box-shadow:inset 1px 1px 0 #3a3a3a"></div>
<div class="a" style="left:1224px;top:73px;width:56px;height:14px;background:#3a3a3a;border-radius:7px 7px 0 0"></div>
<div class="t" style="left:1226px;width:52px;text-align:center;top:75px;font-size:11.5px;letter-spacing:-0.5px;color:#a9b1b9">Item List</div>
<div class="a" style="left:1282px;top:72px;width:55px;height:16px;background:#484848;border-radius:7px 7px 0 0;border:1px solid #5a5a5a;border-bottom:none"></div>
<div class="t" style="left:1284px;width:51px;text-align:center;top:75px;font-size:11.5px;letter-spacing:-0.5px;color:#f39c1f">Shading</div>
<div class="a" style="left:1340px;top:73px;width:55px;height:14px;background:#3a3a3a;border-radius:7px 7px 0 0"></div>
<div class="t" style="left:1342px;width:51px;text-align:center;top:75px;font-size:11.5px;letter-spacing:-0.5px;color:#a9b1b9">Clips</div>
<div class="a" style="left:1396px;top:73px;width:57px;height:14px;background:#3a3a3a;border-radius:7px 7px 0 0"></div>
<div class="t" style="left:1398px;width:53px;text-align:center;top:75px;font-size:11.5px;letter-spacing:-0.5px;color:#a9b1b9">Channels</div>
<div class="a" style="left:1456px;top:73px;width:90px;height:14px;background:#3a3a3a;border-radius:7px 7px 0 0"></div>
<div class="t" style="left:1458px;width:86px;text-align:center;top:75px;font-size:11.5px;letter-spacing:-0.5px;color:#a9b1b9">Vertex Map List</div>
<div class="t" style="left:1549px;top:73px;color:#b8b8b8;font-size:12px;letter-spacing:0;">+</div>
<div class="t" style="left:1214px;top:95.5px;color:#dadada;font-size:11.5px;letter-spacing:-0.25px;">View</div>
<div class="dd" style="left:1240px;top:91.5px;width:390px"></div>
<div class="t" style="left:1245.5px;top:95.5px;color:#dcdcdc;font-size:11.5px;letter-spacing:-0.45px;">Shader Tree</div>
<div class="a" style="left:1617px;top:98.5px;border:4px solid transparent;border-top:5px solid #d8d8d8;border-bottom:none"></div>
<div class="dd" style="left:1633px;top:91.5px;width:380px"></div>
<div class="t" style="left:1637px;top:95.5px;color:#dcdcdc;font-size:11.5px;letter-spacing:-0.45px;">Assign Material</div>
<div class="t" style="left:1212px;top:117px;color:#dadada;font-size:11.5px;letter-spacing:-0.25px;">Filter</div>
<div class="dd" style="left:1240px;top:113px;width:390px"></div>
<div class="t" style="left:1245.5px;top:117px;color:#dcdcdc;font-size:11.5px;letter-spacing:-0.45px;">(none)</div>
<div class="a" style="left:1617px;top:120px;border:4px solid transparent;border-top:5px solid #d8d8d8;border-bottom:none"></div>
<div class="dd" style="left:1633px;top:113px;width:380px"></div>
<div class="t" style="left:1639px;top:117px;color:#dcdcdc;font-size:11.5px;letter-spacing:-0.45px;">Add Layer</div>
<div class="a" style="left:1212px;top:134px;width:790px;height:1116px;border-radius:7px 0 0 8px;overflow:hidden;background:#9aa2aa;border:1px solid #30363b;border-right:none">
<div class="a" style="left:0;top:0;width:790px;height:17px;background:#65717d;border-bottom:1px solid #3f474e"></div>
<div class="a" style="left:0;top:17px;width:790px;height:18px;background:#a0a8b1"></div>
<div class="a" style="left:0;top:35px;width:790px;height:18px;background:#9aa2aa"></div>
<div class="a" style="left:0;top:53px;width:790px;height:18px;background:#a0a8b1"></div>
<div class="a" style="left:0;top:71px;width:790px;height:18px;background:#9aa2aa"></div>
<div class="a" style="left:0;top:89px;width:790px;height:18px;background:#a0a8b1"></div>
<div class="a" style="left:0;top:107px;width:790px;height:18px;background:#40484f"></div>
<div class="a" style="left:0;top:125px;width:790px;height:18px;background:#a0a8b1"></div>
<div class="a" style="left:0;top:143px;width:790px;height:18px;background:#9aa2aa"></div>
<div class="a" style="left:0;top:161px;width:790px;height:18px;background:#a0a8b1"></div>
<div class="a" style="left:0;top:179px;width:790px;height:18px;background:#9aa2aa"></div>
<div class="a" style="left:0;top:197px;width:790px;height:18px;background:#a0a8b1"></div>
<div class="a" style="left:0;top:215px;width:790px;height:18px;background:#9aa2aa"></div>
<div class="a" style="left:0;top:233px;width:790px;height:18px;background:#a0a8b1"></div>
<div class="a" style="left:0;top:251px;width:790px;height:18px;background:#9aa2aa"></div>
<div class="a" style="left:0;top:269px;width:790px;height:18px;background:#a0a8b1"></div>
<div class="a" style="left:0;top:287px;width:790px;height:18px;background:#9aa2aa"></div>
<div class="a" style="left:0;top:305px;width:790px;height:18px;background:#a0a8b1"></div>
<div class="a" style="left:0;top:323px;width:790px;height:18px;background:#9aa2aa"></div>
<div class="a" style="left:0;top:341px;width:790px;height:18px;background:#a0a8b1"></div>
<div class="a" style="left:24px;top:0;width:1px;height:1115px;background:rgba(40,48,56,.45)"></div>
<div class="a" style="left:569px;top:0;width:1px;height:1115px;background:rgba(40,48,56,.45)"></div>
</div>
<div class="t" style="left:1252px;top:138px;color:#cfd6dd;font-size:11.5px;letter-spacing:-0.25px;">Name</div>
<div class="t" style="left:1785px;top:138px;color:#cfd6dd;font-size:11.5px;letter-spacing:-0.25px;">Effect</div>
<svg width="0" height="0" style="left:0;top:0"><defs>
<radialGradient id="sB" cx="0.36" cy="0.3" r="0.72"><stop offset="0" stop-color="#fff"/><stop offset="0.18" stop-color="#c4c4f4"/><stop offset="0.55" stop-color="#7878cc"/><stop offset="0.85" stop-color="#4c4ca0"/><stop offset="1" stop-color="#2c2c6a"/></radialGradient>
<radialGradient id="sW" cx="0.36" cy="0.3" r="0.72"><stop offset="0" stop-color="#fff"/><stop offset="0.3" stop-color="#eaeaea"/><stop offset="0.62" stop-color="#b4b4b4"/><stop offset="0.88" stop-color="#6c6c6c"/><stop offset="1" stop-color="#404040"/></radialGradient>
<radialGradient id="sG" cx="0.36" cy="0.3" r="0.72"><stop offset="0" stop-color="#f0fff6"/><stop offset="0.3" stop-color="#a4d8b8"/><stop offset="0.75" stop-color="#4c8a66"/><stop offset="1" stop-color="#244a36"/></radialGradient>
<radialGradient id="sR" cx="0.4" cy="0.35" r="0.8"><stop offset="0" stop-color="#f06060"/><stop offset="0.6" stop-color="#c82020"/><stop offset="1" stop-color="#801010"/></radialGradient>
<radialGradient id="sK" cx="0.4" cy="0.35" r="0.8"><stop offset="0" stop-color="#b09a50"/><stop offset="0.3" stop-color="#4a3e18"/><stop offset="0.7" stop-color="#141006"/><stop offset="1" stop-color="#000"/></radialGradient>
</defs></svg>
<div class="a" style="left:1245px;top:166px;width:1px;height:211px;background-image:linear-gradient(180deg,#59626a 50%,transparent 50%);background-size:1px 2px"></div>
<div class="a" style="left:1257px;top:238px;width:1px;height:121px;background-image:linear-gradient(180deg,#59626a 50%,transparent 50%);background-size:1px 2px"></div>
<div class="a" style="left:1269px;top:256px;width:1px;height:85px;background-image:linear-gradient(180deg,#59626a 50%,transparent 50%);background-size:1px 2px"></div>
<svg style="left:1217px;top:137.5px" width="13" height="10" viewBox="0 0 13 10"><path d="M0.6 5C2.6 1.8 10 1.4 12.4 4.6 10 8.8 3 8.8 0.6 5z" fill="#aeb5bc"/><circle cx="6.3" cy="4.9" r="3" fill="#0e0e0e"/><circle cx="5.2" cy="3.9" r="0.95" fill="#f4f4f4"/><g fill="none" stroke="#161616"><path d="M0.4 5.1C2.6 1.6 10 1.2 12.6 4.6" stroke-width="1.15"/><path d="M0.6 5.2C3 8.9 10 8.9 12.4 4.8" stroke-width="0.9"/><path d="M1.2 2.9C3.4 0.3 9.6 0 12 2.4" stroke-width="0.7" opacity="0.85"/><path d="M2.2 8C4.8 10 9 9.9 11.4 7.4" stroke-width="0.6" opacity="0.8"/></g></svg>
<div class="a" style="left:1241px;top:158px;border:4px solid transparent;border-top:7px solid #4a5258;border-bottom:none"></div>
<div class="a" style="left:1252px;top:161px;width:7px;height:1px;background:#30363b"></div><div class="a" style="left:1255px;top:158px;width:1px;height:7px;background:#30363b"></div>
<svg style="left:1261.5px;top:154px" width="14" height="14" viewBox="-7 -7 14 14"><circle r="6.5" fill="url(#sB)"/></svg>
<div class="t" style="left:1280px;top:156px;font-size:11.5px;letter-spacing:-0.3px"><span style="color:#0c0c0c">Render</span></div>
<svg style="left:1217px;top:174px" width="13" height="10" viewBox="0 0 13 10"><path d="M0.6 5C2.6 1.8 10 1.4 12.4 4.6 10 8.8 3 8.8 0.6 5z" fill="#aeb5bc"/><circle cx="6.3" cy="4.9" r="3" fill="#0e0e0e"/><circle cx="5.2" cy="3.9" r="0.95" fill="#f4f4f4"/><g fill="none" stroke="#161616"><path d="M0.4 5.1C2.6 1.6 10 1.2 12.6 4.6" stroke-width="1.15"/><path d="M0.6 5.2C3 8.9 10 8.9 12.4 4.8" stroke-width="0.9"/><path d="M1.2 2.9C3.4 0.3 9.6 0 12 2.4" stroke-width="0.7" opacity="0.85"/><path d="M2.2 8C4.8 10 9 9.9 11.4 7.4" stroke-width="0.6" opacity="0.8"/></g></svg>
<div class="a" style="left:1246px;top:179px;width:8px;height:1px;background-image:linear-gradient(90deg,#59626a 50%,transparent 50%);background-size:2px 1px"></div>
<div class="a" style="left:1254px;top:178px;width:3px;height:3px;background:#6a737c"></div>
<svg style="left:1274px;top:173px" width="13" height="11" viewBox="0 0 13 11"><rect x="0.5" y="0.5" width="12" height="10" fill="#f4f0e0" stroke="#8a8a8a" stroke-width="0.6"/><rect x="1.8" y="1.8" width="9.4" height="7.4" fill="#2a2410"/><path d="M2 9.2V5.5l2-1.8 0.6 2zM11.2 9.2V5l-1.6-1.4-0.6 2z" fill="#4a5a20" opacity="0.8"/><path d="M3.6 9.2c0.2-2 1.2-2.8 2-3.1-0.8-1.4 0-3 1.2-3 1.4 0 2 1.6 1.2 3 1 0.4 1.8 1.2 2 3.1z" fill="#e0b030"/><circle cx="6.8" cy="4.6" r="1" fill="#f4dc90"/></svg>
<div class="t" style="left:1292px;top:174px;font-size:11.5px;letter-spacing:-0.3px"><span style="color:#0c0c0c">Alpha Output</span></div>
<div class="t" style="left:1784px;top:174px;font-size:11.5px;letter-spacing:-0.3px"><span style="color:#0c0c0c">Alpha</span></div>
<svg style="left:1217px;top:192px" width="13" height="10" viewBox="0 0 13 10"><path d="M0.6 5C2.6 1.8 10 1.4 12.4 4.6 10 8.8 3 8.8 0.6 5z" fill="#aeb5bc"/><circle cx="6.3" cy="4.9" r="3" fill="#0e0e0e"/><circle cx="5.2" cy="3.9" r="0.95" fill="#f4f4f4"/><g fill="none" stroke="#161616"><path d="M0.4 5.1C2.6 1.6 10 1.2 12.6 4.6" stroke-width="1.15"/><path d="M0.6 5.2C3 8.9 10 8.9 12.4 4.8" stroke-width="0.9"/><path d="M1.2 2.9C3.4 0.3 9.6 0 12 2.4" stroke-width="0.7" opacity="0.85"/><path d="M2.2 8C4.8 10 9 9.9 11.4 7.4" stroke-width="0.6" opacity="0.8"/></g></svg>
<div class="a" style="left:1246px;top:197px;width:8px;height:1px;background-image:linear-gradient(90deg,#59626a 50%,transparent 50%);background-size:2px 1px"></div>
<div class="a" style="left:1254px;top:196px;width:3px;height:3px;background:#6a737c"></div>
<svg style="left:1274px;top:191px" width="13" height="11" viewBox="0 0 13 11"><rect x="0.5" y="0.5" width="12" height="10" fill="#f4f0e0" stroke="#8a8a8a" stroke-width="0.6"/><rect x="1.8" y="1.8" width="9.4" height="7.4" fill="#2a2410"/><path d="M2 9.2V5.5l2-1.8 0.6 2zM11.2 9.2V5l-1.6-1.4-0.6 2z" fill="#4a5a20" opacity="0.8"/><path d="M3.6 9.2c0.2-2 1.2-2.8 2-3.1-0.8-1.4 0-3 1.2-3 1.4 0 2 1.6 1.2 3 1 0.4 1.8 1.2 2 3.1z" fill="#e0b030"/><circle cx="6.8" cy="4.6" r="1" fill="#f4dc90"/></svg>
<div class="t" style="left:1292px;top:192px;font-size:11.5px;letter-spacing:-0.3px"><span style="color:#0c0c0c">Final Color Output</span></div>
<div class="t" style="left:1784px;top:192px;font-size:11.5px;letter-spacing:-0.3px"><span style="color:#0c0c0c">Final Color</span></div>
<svg style="left:1217px;top:210px" width="13" height="10" viewBox="0 0 13 10"><path d="M0.6 5C2.6 1.8 10 1.4 12.4 4.6 10 8.8 3 8.8 0.6 5z" fill="#aeb5bc"/><circle cx="6.3" cy="4.9" r="3" fill="#0e0e0e"/><circle cx="5.2" cy="3.9" r="0.95" fill="#f4f4f4"/><g fill="none" stroke="#161616"><path d="M0.4 5.1C2.6 1.6 10 1.2 12.6 4.6" stroke-width="1.15"/><path d="M0.6 5.2C3 8.9 10 8.9 12.4 4.8" stroke-width="0.9"/><path d="M1.2 2.9C3.4 0.3 9.6 0 12 2.4" stroke-width="0.7" opacity="0.85"/><path d="M2.2 8C4.8 10 9 9.9 11.4 7.4" stroke-width="0.6" opacity="0.8"/></g></svg>
<div class="a" style="left:1246px;top:215px;width:8px;height:1px;background-image:linear-gradient(90deg,#59626a 50%,transparent 50%);background-size:2px 1px"></div>
<div class="a" style="left:1254px;top:214px;width:3px;height:3px;background:#6a737c"></div>
<svg style="left:1273px;top:208px" width="14" height="14" viewBox="-7 -7 14 14"><circle r="6.5" fill="url(#sW)"/></svg>
<div class="t" style="left:1292px;top:210px;font-size:11.5px;letter-spacing:-0.3px"><span style="color:#0c0c0c">Base Shader</span></div>
<div class="t" style="left:1784px;top:210px;font-size:11.5px;letter-spacing:-0.3px"><span style="color:#0c0c0c">Full Shading</span></div>
<svg style="left:1217px;top:228px" width="13" height="10" viewBox="0 0 13 10"><path d="M0.6 5C2.6 1.8 10 1.4 12.4 4.6 10 8.8 3 8.8 0.6 5z" fill="#aeb5bc"/><circle cx="6.3" cy="4.9" r="3" fill="#0e0e0e"/><circle cx="5.2" cy="3.9" r="0.95" fill="#f4f4f4"/><g fill="none" stroke="#161616"><path d="M0.4 5.1C2.6 1.6 10 1.2 12.6 4.6" stroke-width="1.15"/><path d="M0.6 5.2C3 8.9 10 8.9 12.4 4.8" stroke-width="0.9"/><path d="M1.2 2.9C3.4 0.3 9.6 0 12 2.4" stroke-width="0.7" opacity="0.85"/><path d="M2.2 8C4.8 10 9 9.9 11.4 7.4" stroke-width="0.6" opacity="0.8"/></g></svg>
<div class="a" style="left:1246px;top:233px;width:6px;height:1px;background-image:linear-gradient(90deg,#59626a 50%,transparent 50%);background-size:2px 1px"></div>
<div class="a" style="left:1253px;top:230px;border:4px solid transparent;border-top:7px solid #4a5258;border-bottom:none"></div>
<svg style="left:1273px;top:226px" width="14" height="14" viewBox="-7 -7 14 14"><circle cx="-1.8" cy="-2" r="4.6" fill="url(#sG)"/><circle cx="2.3" cy="2.4" r="4.4" fill="#cc2626" opacity="0.88"/><path d="M-0.8 0.6l5-2.4" stroke="#e85050" stroke-width="0.8" opacity="0.6"/></svg>
<div class="t" style="left:1293px;top:228px;font-size:11.5px;letter-spacing:-0.3px"><span style="color:#0c0c0c">floor</span> <span style="color:#6b747d">(Material)</span></div>
<div class="a" style="left:1245px;top:242px;width:1px;height:18px;background-image:linear-gradient(180deg,#b0b8c0 50%,transparent 50%);background-size:1px 2px"></div>
<div class="a" style="left:1257px;top:242px;width:1px;height:18px;background-image:linear-gradient(180deg,#b0b8c0 50%,transparent 50%);background-size:1px 2px"></div>
<div class="a" style="left:1269px;top:256px;width:1px;height:4px;background-image:linear-gradient(180deg,#b0b8c0 50%,transparent 50%);background-size:1px 2px"></div>
<svg style="left:1217px;top:246px" width="13" height="10" viewBox="0 0 13 10"><path d="M0.6 5C2.6 1.8 10 1.4 12.4 4.6 10 8.8 3 8.8 0.6 5z" fill="#aeb5bc"/><circle cx="6.3" cy="4.9" r="3" fill="#0e0e0e"/><circle cx="5.2" cy="3.9" r="0.95" fill="#f4f4f4"/><g fill="none" stroke="#161616"><path d="M0.4 5.1C2.6 1.6 10 1.2 12.6 4.6" stroke-width="1.15"/><path d="M0.6 5.2C3 8.9 10 8.9 12.4 4.8" stroke-width="0.9"/><path d="M1.2 2.9C3.4 0.3 9.6 0 12 2.4" stroke-width="0.7" opacity="0.85"/><path d="M2.2 8C4.8 10 9 9.9 11.4 7.4" stroke-width="0.6" opacity="0.8"/></g></svg>
<div class="a" style="left:1258px;top:251px;width:6px;height:1px;background-image:linear-gradient(90deg,#b0b8c0 50%,transparent 50%);background-size:2px 1px"></div>
<div class="a" style="left:1265px;top:248px;border:4px solid transparent;border-top:7px solid #9aa2aa;border-bottom:none"></div>
<svg style="left:1285px;top:244px" width="14" height="14" viewBox="-7 -7 14 14"><circle cx="-1.8" cy="-2" r="4.6" fill="url(#sG)"/><circle cx="2.3" cy="2.4" r="4.4" fill="#cc2626" opacity="0.88"/><path d="M-0.8 0.6l5-2.4" stroke="#e85050" stroke-width="0.8" opacity="0.6"/></svg>
<div class="t" style="left:1305px;top:246px;font-size:11.5px;letter-spacing:-0.3px"><span style="color:#f39c1f">floor_white_oak</span> <span style="color:#6b747d">(2)</span></div>
<div class="t" style="left:1784px;top:246px;font-size:11.5px;letter-spacing:-0.3px"><span style="color:#f39c1f">(all)</span></div>
<svg style="left:1217px;top:264px" width="13" height="10" viewBox="0 0 13 10"><path d="M0.6 5C2.6 1.8 10 1.4 12.4 4.6 10 8.8 3 8.8 0.6 5z" fill="#aeb5bc"/><circle cx="6.3" cy="4.9" r="3" fill="#0e0e0e"/><circle cx="5.2" cy="3.9" r="0.95" fill="#f4f4f4"/><g fill="none" stroke="#161616"><path d="M0.4 5.1C2.6 1.6 10 1.2 12.6 4.6" stroke-width="1.15"/><path d="M0.6 5.2C3 8.9 10 8.9 12.4 4.8" stroke-width="0.9"/><path d="M1.2 2.9C3.4 0.3 9.6 0 12 2.4" stroke-width="0.7" opacity="0.85"/><path d="M2.2 8C4.8 10 9 9.9 11.4 7.4" stroke-width="0.6" opacity="0.8"/></g></svg>
<div class="a" style="left:1270px;top:269px;width:8px;height:1px;background-image:linear-gradient(90deg,#59626a 50%,transparent 50%);background-size:2px 1px"></div>
<div class="a" style="left:1278px;top:268px;width:3px;height:3px;background:#6a737c"></div>
<svg style="left:1297px;top:262px" width="14" height="14" viewBox="-7 -7 14 14"><g fill="#d65f5c"><path d="M-0.2 -2.2C0.2 -4.4 2.2 -6.2 4.6 -5.8 3.6 -4.6 3.4 -3.2 2.2 -1.4z" transform="rotate(0)"/><path d="M-0.2 -2.2C0.2 -4.4 2.2 -6.2 4.6 -5.8 3.6 -4.6 3.4 -3.2 2.2 -1.4z" transform="rotate(60)"/><path d="M-0.2 -2.2C0.2 -4.4 2.2 -6.2 4.6 -5.8 3.6 -4.6 3.4 -3.2 2.2 -1.4z" transform="rotate(120)"/><path d="M-0.2 -2.2C0.2 -4.4 2.2 -6.2 4.6 -5.8 3.6 -4.6 3.4 -3.2 2.2 -1.4z" transform="rotate(180)"/><path d="M-0.2 -2.2C0.2 -4.4 2.2 -6.2 4.6 -5.8 3.6 -4.6 3.4 -3.2 2.2 -1.4z" transform="rotate(240)"/><path d="M-0.2 -2.2C0.2 -4.4 2.2 -6.2 4.6 -5.8 3.6 -4.6 3.4 -3.2 2.2 -1.4z" transform="rotate(300)"/><circle r="3.1"/></g><circle r="1.5" fill="#a0a8b1"/></svg>
<div class="t" style="left:1317px;top:264px;font-size:11.5px;letter-spacing:-0.3px"><span style="color:#0c0c0c">floor_white_oak</span></div>
<svg style="left:1216px;top:280px" width="15" height="14" viewBox="0 0 15 14"><path d="M13.5 0.8L7 8l1.8 1.4L14.6 1.6z" fill="#f4e8c0" stroke="#6a5a30" stroke-width="0.6"/><path d="M6.6 8.2c-2.2 0.4-2.6 3-5.6 4.4 3.2 0.8 6.6 0 7.6-2.8z" fill="#d89020" stroke="#7a4a08" stroke-width="0.6"/></svg>
<div class="a" style="left:1270px;top:287px;width:6px;height:1px;background-image:linear-gradient(90deg,#59626a 50%,transparent 50%);background-size:2px 1px"></div>
<div class="a" style="left:1288px;top:287px;width:7px;height:1px;background:#30363b"></div><div class="a" style="left:1291px;top:284px;width:1px;height:7px;background:#30363b"></div>
<svg style="left:1297px;top:280px" width="14" height="14" viewBox="-7 -7 14 14"><circle r="6.5" fill="url(#sK)"/><path d="M0.6 -4.2c1.6-0.6 3.4 0.4 3.6 2 0.2 1.4-0.8 2-0.4 3.4-1.6 0-2.8-0.8-3-2.2-0.2-1.2 0.4-2-0.2-3.2z" fill="#c89838" opacity="0.95"/><path d="M1 2.6c1.2-0.8 2.8-0.6 3.6 0.2-0.8 1.2-2.2 1.8-3.6 1.4z" fill="#b88a30" opacity="0.9"/><circle cx="-2.4" cy="-3" r="1.3" fill="#f4e8a0" opacity="0.9"/></svg>
<div class="t" style="left:1316px;top:282px;font-size:11.5px;letter-spacing:-0.55px"><span style="color:#0c0c0c">Oak-Classic-RL-2-5m-300mm_4k</span> <span style="color:#6b747d">(Image)</span></div>
<div class="t" style="left:1784px;top:282px;font-size:11.5px;letter-spacing:-0.3px"><span style="color:#0c0c0c">Diffuse Color</span></div>
<svg style="left:1217px;top:300px" width="13" height="10" viewBox="0 0 13 10"><path d="M0.6 5C2.6 1.8 10 1.4 12.4 4.6 10 8.8 3 8.8 0.6 5z" fill="#aeb5bc"/><circle cx="6.3" cy="4.9" r="3" fill="#0e0e0e"/><circle cx="5.2" cy="3.9" r="0.95" fill="#f4f4f4"/><g fill="none" stroke="#161616"><path d="M0.4 5.1C2.6 1.6 10 1.2 12.6 4.6" stroke-width="1.15"/><path d="M0.6 5.2C3 8.9 10 8.9 12.4 4.8" stroke-width="0.9"/><path d="M1.2 2.9C3.4 0.3 9.6 0 12 2.4" stroke-width="0.7" opacity="0.85"/><path d="M2.2 8C4.8 10 9 9.9 11.4 7.4" stroke-width="0.6" opacity="0.8"/></g></svg>
<div class="a" style="left:1270px;top:305px;width:6px;height:1px;background-image:linear-gradient(90deg,#59626a 50%,transparent 50%);background-size:2px 1px"></div>
<div class="a" style="left:1288px;top:305px;width:7px;height:1px;background:#30363b"></div><div class="a" style="left:1291px;top:302px;width:1px;height:7px;background:#30363b"></div>
<svg style="left:1297px;top:298px" width="14" height="14" viewBox="-7 -7 14 14"><circle r="6.5" fill="url(#sK)"/><path d="M0.6 -4.2c1.6-0.6 3.4 0.4 3.6 2 0.2 1.4-0.8 2-0.4 3.4-1.6 0-2.8-0.8-3-2.2-0.2-1.2 0.4-2-0.2-3.2z" fill="#c89838" opacity="0.95"/><path d="M1 2.6c1.2-0.8 2.8-0.6 3.6 0.2-0.8 1.2-2.2 1.8-3.6 1.4z" fill="#b88a30" opacity="0.9"/><circle cx="-2.4" cy="-3" r="1.3" fill="#f4e8a0" opacity="0.9"/></svg>
<div class="t" style="left:1316px;top:300px;font-size:11.5px;letter-spacing:-0.55px"><span style="color:#0c0c0c">Oak-Classic-RL-2-5m-300mm_GLOSS_4k</span> <span style="color:#6b747d">(Image)</span></div>
<div class="t" style="left:1784px;top:300px;font-size:11.5px;letter-spacing:-0.3px"><span style="color:#0c0c0c">Roughness</span></div>
<svg style="left:1217px;top:318px" width="13" height="10" viewBox="0 0 13 10"><path d="M0.6 5C2.6 1.8 10 1.4 12.4 4.6 10 8.8 3 8.8 0.6 5z" fill="#aeb5bc"/><circle cx="6.3" cy="4.9" r="3" fill="#0e0e0e"/><circle cx="5.2" cy="3.9" r="0.95" fill="#f4f4f4"/><g fill="none" stroke="#161616"><path d="M0.4 5.1C2.6 1.6 10 1.2 12.6 4.6" stroke-width="1.15"/><path d="M0.6 5.2C3 8.9 10 8.9 12.4 4.8" stroke-width="0.9"/><path d="M1.2 2.9C3.4 0.3 9.6 0 12 2.4" stroke-width="0.7" opacity="0.85"/><path d="M2.2 8C4.8 10 9 9.9 11.4 7.4" stroke-width="0.6" opacity="0.8"/></g></svg>
<div class="a" style="left:1270px;top:323px;width:6px;height:1px;background-image:linear-gradient(90deg,#59626a 50%,transparent 50%);background-size:2px 1px"></div>
<div class="a" style="left:1288px;top:323px;width:7px;height:1px;background:#30363b"></div><div class="a" style="left:1291px;top:320px;width:1px;height:7px;background:#30363b"></div>
<svg style="left:1297px;top:316px" width="14" height="14" viewBox="-7 -7 14 14"><circle r="6.5" fill="url(#sK)"/><path d="M0.6 -4.2c1.6-0.6 3.4 0.4 3.6 2 0.2 1.4-0.8 2-0.4 3.4-1.6 0-2.8-0.8-3-2.2-0.2-1.2 0.4-2-0.2-3.2z" fill="#c89838" opacity="0.95"/><path d="M1 2.6c1.2-0.8 2.8-0.6 3.6 0.2-0.8 1.2-2.2 1.8-3.6 1.4z" fill="#b88a30" opacity="0.9"/><circle cx="-2.4" cy="-3" r="1.3" fill="#f4e8a0" opacity="0.9"/></svg>
<div class="t" style="left:1316px;top:318px;font-size:11.5px;letter-spacing:-0.55px"><span style="color:#0c0c0c">Oak-Classic-RL-2-5m-300mm_NORM_4k</span> <span style="color:#6b747d">(Image)</span></div>
<div class="t" style="left:1784px;top:318px;font-size:11.5px;letter-spacing:-0.3px"><span style="color:#0c0c0c">Normal</span></div>
<svg style="left:1217px;top:336px" width="13" height="10" viewBox="0 0 13 10"><path d="M0.6 5C2.6 1.8 10 1.4 12.4 4.6 10 8.8 3 8.8 0.6 5z" fill="#aeb5bc"/><circle cx="6.3" cy="4.9" r="3" fill="#0e0e0e"/><circle cx="5.2" cy="3.9" r="0.95" fill="#f4f4f4"/><g fill="none" stroke="#161616"><path d="M0.4 5.1C2.6 1.6 10 1.2 12.6 4.6" stroke-width="1.15"/><path d="M0.6 5.2C3 8.9 10 8.9 12.4 4.8" stroke-width="0.9"/><path d="M1.2 2.9C3.4 0.3 9.6 0 12 2.4" stroke-width="0.7" opacity="0.85"/><path d="M2.2 8C4.8 10 9 9.9 11.4 7.4" stroke-width="0.6" opacity="0.8"/></g></svg>
<div class="a" style="left:1270px;top:341px;width:8px;height:1px;background-image:linear-gradient(90deg,#59626a 50%,transparent 50%);background-size:2px 1px"></div>
<div class="a" style="left:1278px;top:340px;width:3px;height:3px;background:#6a737c"></div>
<svg style="left:1297px;top:334px" width="14" height="14" viewBox="-7 -7 14 14"><circle r="6.5" fill="url(#sG)"/></svg>
<div class="t" style="left:1316px;top:336px;font-size:11.5px;letter-spacing:-0.3px"><span style="color:#0c0c0c">Material</span> <span style="color:#6b747d">(2)</span></div>
<div class="t" style="left:1784.5px;top:336px;font-size:11.5px;letter-spacing:-0.3px"><span style="color:#0c0c0c">(all)</span></div>
<svg style="left:1217px;top:354px" width="13" height="10" viewBox="0 0 13 10"><path d="M0.6 5C2.6 1.8 10 1.4 12.4 4.6 10 8.8 3 8.8 0.6 5z" fill="#aeb5bc"/><circle cx="6.3" cy="4.9" r="3" fill="#0e0e0e"/><circle cx="5.2" cy="3.9" r="0.95" fill="#f4f4f4"/><g fill="none" stroke="#161616"><path d="M0.4 5.1C2.6 1.6 10 1.2 12.6 4.6" stroke-width="1.15"/><path d="M0.6 5.2C3 8.9 10 8.9 12.4 4.8" stroke-width="0.9"/><path d="M1.2 2.9C3.4 0.3 9.6 0 12 2.4" stroke-width="0.7" opacity="0.85"/><path d="M2.2 8C4.8 10 9 9.9 11.4 7.4" stroke-width="0.6" opacity="0.8"/></g></svg>
<div class="a" style="left:1258px;top:359px;width:8px;height:1px;background-image:linear-gradient(90deg,#59626a 50%,transparent 50%);background-size:2px 1px"></div>
<div class="a" style="left:1266px;top:358px;width:3px;height:3px;background:#6a737c"></div>
<svg style="left:1285px;top:352px" width="14" height="14" viewBox="-7 -7 14 14"><circle r="6.5" fill="url(#sG)"/></svg>
<div class="t" style="left:1304px;top:354px;font-size:11.5px;letter-spacing:-0.3px"><span style="color:#0c0c0c">Material</span></div>
<div class="t" style="left:1784.5px;top:354px;font-size:11.5px;letter-spacing:-0.3px"><span style="color:#0c0c0c">(all)</span></div>
<svg style="left:1217px;top:372px" width="13" height="10" viewBox="0 0 13 10"><path d="M0.6 5C2.6 1.8 10 1.4 12.4 4.6 10 8.8 3 8.8 0.6 5z" fill="#aeb5bc"/><circle cx="6.3" cy="4.9" r="3" fill="#0e0e0e"/><circle cx="5.2" cy="3.9" r="0.95" fill="#f4f4f4"/><g fill="none" stroke="#161616"><path d="M0.4 5.1C2.6 1.6 10 1.2 12.6 4.6" stroke-width="1.15"/><path d="M0.6 5.2C3 8.9 10 8.9 12.4 4.8" stroke-width="0.9"/><path d="M1.2 2.9C3.4 0.3 9.6 0 12 2.4" stroke-width="0.7" opacity="0.85"/><path d="M2.2 8C4.8 10 9 9.9 11.4 7.4" stroke-width="0.6" opacity="0.8"/></g></svg>
<div class="a" style="left:1246px;top:377px;width:8px;height:1px;background-image:linear-gradient(90deg,#59626a 50%,transparent 50%);background-size:2px 1px"></div>
<div class="a" style="left:1254px;top:376px;width:3px;height:3px;background:#6a737c"></div>
<svg style="left:1273px;top:370px" width="14" height="14" viewBox="-7 -7 14 14"><circle r="6.5" fill="url(#sG)"/></svg>
<div class="t" style="left:1292px;top:372px;font-size:11.5px;letter-spacing:-0.3px"><span style="color:#0c0c0c">Base Material</span></div>
<div class="t" style="left:1784.5px;top:372px;font-size:11.5px;letter-spacing:-0.3px"><span style="color:#0c0c0c">(all)</span></div>
<svg style="left:1262.0px;top:388.5px" width="14" height="12" viewBox="0 0 14 12"><path d="M0.5 0.8h5.2l1 1.4h6.3v8.6h-12.5z" fill="#c9a04a" stroke="#a8843a" stroke-width="0.8"/><path d="M1 3.6h11.6v6.8h-11.6z" fill="#f3c86e"/></svg>
<div class="t" style="left:1280px;top:390px;font-size:11.5px;letter-spacing:-0.3px"><span style="color:#0c0c0c">Library</span></div>
<svg style="left:1262.0px;top:406.5px" width="14" height="12" viewBox="0 0 14 12"><path d="M0.5 0.8h5.2l1 1.4h6.3v8.6h-12.5z" fill="#c9a04a" stroke="#a8843a" stroke-width="0.8"/><path d="M1 3.6h11.6v6.8h-11.6z" fill="#f3c86e"/></svg>
<div class="t" style="left:1280px;top:408px;font-size:11.5px;letter-spacing:-0.3px"><span style="color:#0c0c0c">Nodes</span></div>
<div class="a" style="left:1242px;top:427px;border:4px solid transparent;border-left:7px solid #4a5258;border-right:none"></div>
<div class="t" style="left:1264px;top:426px;font-size:11.5px;letter-spacing:-0.3px"><span style="color:#0c0c0c">Lights</span></div>
<div class="a" style="left:1242px;top:445px;border:4px solid transparent;border-left:7px solid #4a5258;border-right:none"></div>
<div class="t" style="left:1264px;top:444px;font-size:11.5px;letter-spacing:-0.3px"><span style="color:#0c0c0c">Environments</span></div>
<div class="t" style="left:1264px;top:462px;font-size:11.5px;letter-spacing:-0.3px"><span style="color:#0c0c0c">Bake Items</span></div>
<svg style="left:1261.5px;top:478px" width="14" height="14" viewBox="0 0 14 14"><rect x="1.5" y="6" width="11" height="7" fill="#1a1a1a"/><path d="M1 5.2l11-3.8 0.8 2.2-11 3.8z" fill="#1a1a1a"/><path d="M3 4.6l1.6 1.8M6 3.6l1.6 1.8M9 2.6l1.6 1.8" stroke="#e8e8e8" stroke-width="1.1"/><path d="M3 9.5h8M3 11h6" stroke="#aaa" stroke-width="0.7"/></svg>
<div class="t" style="left:1280px;top:480px;font-size:11.5px;letter-spacing:-0.3px"><span style="color:#0c0c0c">FX</span></div>
<div class="a" style="left:1208px;top:1252.5px;width:789px;height:1.6px;background:#2e2e2e;"></div>
<div class="a" style="left:1209px;top:1254px;width:788px;height:1px;background:#5c5c5c;"></div>
<div class="t" style="left:1911px;top:1262px;color:#d4d4d4;font-size:10px;letter-spacing:-0.2px;">Presets</div>
<div class="t" style="left:1948px;top:1262px;color:#d4d4d4;font-size:10px;letter-spacing:-0.2px;">One Tab</div>
<div class="a" style="left:1986px;top:1265px;border:4px solid transparent;border-top:5px solid #d8d8d8;border-bottom:none"></div>
<div class="hdr" style="top:1277.2px"></div>
<div class="a" style="left:1217px;top:1282.2px;border:4px solid transparent;border-top:7px solid #5c5c5c;border-bottom:none"></div>
<div class="t" style="left:1228px;top:1280.2px;color:#dcdcdc;font-size:11.5px;letter-spacing:-0.25px;">Layer</div>
<div class="cb" style="top:1296.4px"></div>
<div class="a" style="left:1571px;top:1297.4px;width:1px;height:16px;background:#3c3c3c"></div>
<div class="a" style="left:1559px;top:1300.6000000000001px;width:9.6px;height:9.6px;border-radius:50%;border:1px solid #3e3e3e;background:#5c5c5c"></div>
<div class="a" style="left:1571.5px;top:1297.4px;width:17px;height:16px;border-radius:1px 5px 5px 1px;background:#f5a21f;border-left:1px solid #3a3020"></div>
<svg style="left:1572.5px;top:1297.4px" width="16" height="16" viewBox="0 0 16 16"><path d="M2.8 8.6L5.4 12.6L12.6 4.4L11.6 3.7L5.9 9.4L4.9 7.4Z" fill="#0a0a0a"/></svg>
<div class="t" style="left:1593px;top:1300.9px;color:#dcdcdc;font-size:11.5px;letter-spacing:-0.45px;">Enable</div>
<div class="cb" style="top:1317.4px"></div>
<div class="a" style="left:1571px;top:1318.4px;width:1px;height:16px;background:#3c3c3c"></div>
<div class="a" style="left:1559px;top:1321.6000000000001px;width:9.6px;height:9.6px;border-radius:50%;border:1px solid #3e3e3e;background:#5c5c5c"></div>
<div class="t" style="left:1593px;top:1321.9px;color:#dcdcdc;font-size:11.5px;letter-spacing:-0.45px;">Invert</div>
<div class="cb" style="top:1338.4px"></div>
<div class="a" style="left:1571px;top:1339.4px;width:1px;height:16px;background:#3c3c3c"></div>
<div class="a" style="left:1559px;top:1342.6000000000001px;width:9.6px;height:9.6px;border-radius:50%;border:1px solid #3e3e3e;background:#5c5c5c"></div>
<div class="a" style="left:1571.5px;top:1339.4px;width:17px;height:16px;border-radius:1px 5px 5px 1px;background:#f5a21f;border-left:1px solid #3a3020"></div>
<svg style="left:1572.5px;top:1339.4px" width="16" height="16" viewBox="0 0 16 16"><path d="M2.8 8.6L5.4 12.6L12.6 4.4L11.6 3.7L5.9 9.4L4.9 7.4Z" fill="#0a0a0a"/></svg>
<div class="t" style="left:1593px;top:1342.9px;color:#dcdcdc;font-size:11.5px;letter-spacing:-0.45px;">GL Display</div>
<div class="cb" style="top:1359.4px"></div>
<div class="a" style="left:1571px;top:1360.4px;width:1px;height:16px;background:#3c3c3c"></div>
<div class="a" style="left:1559px;top:1363.6000000000001px;width:9.6px;height:9.6px;border-radius:50%;border:1px solid #3e3e3e;background:#5c5c5c"></div>
<div class="t" style="left:1593px;top:1363.9px;color:#dcdcdc;font-size:11.5px;letter-spacing:-0.45px;">Ignore Scale Group</div>
<div class="t" style="right:445px;top:1385px;color:#dcdcdc;font-size:11.5px;letter-spacing:-0.55px;">Blend Mode</div>
<div class="a" style="left:1556.5px;top:1380.6px;width:460px;height:18px;border-radius:6px;background:#616161;border:1px solid #2c2c2c;box-shadow:0 1px 0 rgba(255,255,255,.1);overflow:hidden"><div class="a" style="left:0;top:0;width:14.5px;height:18px;background:#575757;border-right:1px solid #3c3c3c"></div></div>
<div class="a" style="left:1559px;top:1384.8px;width:9.6px;height:9.6px;border-radius:50%;border:1px solid #3e3e3e;background:#5c5c5c"></div>
<div class="t" style="left:1576px;top:1385px;color:#dcdcdc;font-size:11.5px;letter-spacing:-0.25px;">Normal</div>
<div class="t" style="right:445px;top:1406px;color:#dcdcdc;font-size:11.5px;letter-spacing:-0.25px;">Opacity</div>
<div class="a" style="left:1556.5px;top:1401.8px;width:460px;height:18px;border-radius:6px;background:#575757;border:1px solid #2c2c2c;box-shadow:0 1px 0 rgba(255,255,255,.1);overflow:hidden"><div class="a" style="left:14px;top:0;width:450px;height:18px;background:#98a2ad"></div></div>
<div class="a" style="left:1559px;top:1406px;width:9.6px;height:9.6px;border-radius:50%;border:1px solid #3e3e3e;background:#5c5c5c"></div>
<div class="t" style="left:1581px;top:1406px;color:#000;font-size:11.5px;letter-spacing:-0.25px;">100.0 %</div>
<div class="hdr" style="top:1423.2px"></div>
<div class="a" style="left:1217px;top:1428.2px;border:4px solid transparent;border-top:7px solid #5c5c5c;border-bottom:none"></div>
<div class="t" style="left:1228px;top:1426.2px;color:#dcdcdc;font-size:11.5px;letter-spacing:-0.25px;">Group</div>
<div class="a" style="left:1556.5px;top:1442.5px;width:460px;height:18px;border-radius:6px;background:#5f5f5f;border:1px solid #2c2c2c"></div>
<div class="a" style="left:1431px;top:252px;width:185px;height:401px;border-radius:8px;background:rgba(101,101,101,0.96);border:1px solid #2c2c2c;box-shadow:2px 2px 2px rgba(0,0,0,.35)"></div>
<div class="a" style="left:1433px;top:572px;width:180px;height:15px;border-radius:3px;background:#f39c1f"></div>
<div class="mi" style="top:270px;color:#e8e8e8;font-size:11.5px;letter-spacing:-0.35px">Rename</div>
<div class="mi" style="top:286px;color:#e8e8e8;font-size:11.5px;letter-spacing:-0.35px">Rename...</div>
<div class="mi" style="top:306px;color:#e8e8e8;font-size:11.5px;letter-spacing:-0.35px">Editor Color</div>
<div class="mi" style="top:322px;color:#e8e8e8;font-size:11.5px;letter-spacing:-0.35px">Properties</div>
<div class="mi" style="top:342px;color:#e8e8e8;font-size:11.5px;letter-spacing:-0.35px">Select Polygons</div>
<div class="mi" style="top:362px;color:#e8e8e8;font-size:11.5px;letter-spacing:-0.35px">Duplicate</div>
<div class="mi" style="top:378px;color:#e8e8e8;font-size:11.5px;letter-spacing:-0.35px">Instance</div>
<div class="mi" style="top:394px;color:#e8e8e8;font-size:11.5px;letter-spacing:-0.35px">Delete</div>
<div class="mi" style="top:414px;color:#e8e8e8;font-size:11.5px;letter-spacing:-0.35px">Copy</div>
<div class="mi" style="top:430px;color:#949494;font-size:11.5px;letter-spacing:-0.35px">Paste</div>
<div class="mi" style="top:450px;color:#e8e8e8;font-size:11.5px;letter-spacing:-0.35px">Reference</div>
<div class="mi" style="top:466px;color:#949494;font-size:11.5px;letter-spacing:-0.35px">De-Reference</div>
<div class="mi" style="top:486px;color:#e8e8e8;font-size:11.5px;letter-spacing:-0.35px">Lock Preset</div>
<div class="mi" style="top:502px;color:#949494;font-size:11.5px;letter-spacing:-0.35px">Unlock Preset</div>
<div class="mi" style="top:522px;color:#949494;font-size:11.5px;letter-spacing:-0.35px">Select Instances</div>
<div class="mi" style="top:538px;color:#949494;font-size:11.5px;letter-spacing:-0.35px">Select Source of Instance</div>
<div class="mi" style="top:558px;color:#e8e8e8;font-size:11.5px;letter-spacing:-0.35px">Preset Browser Palette</div>
<div class="mi" style="top:574px;color:#000;font-size:11.5px;letter-spacing:-0.35px">Save Preset...</div>
<div class="mi" style="top:590px;color:#e8e8e8;font-size:11.5px;letter-spacing:-0.35px">Save Preset With Thumbnail ...</div>
<div class="mi" style="top:610px;color:#e8e8e8;font-size:11.5px;letter-spacing:-0.35px">Tag Copy from Mask</div>
<div class="mi" style="top:626px;color:#e8e8e8;font-size:11.5px;letter-spacing:-0.35px">Tag Polys with Selected Mask</div>
<div class="sep" style="top:300px"></div>
<div class="sep" style="top:336px"></div>
<div class="sep" style="top:356px"></div>
<div class="sep" style="top:408px"></div>
<div class="sep" style="top:444px"></div>
<div class="sep" style="top:480px"></div>
<div class="sep" style="top:516px"></div>
<div class="sep" style="top:552px"></div>
<div class="sep" style="top:604px"></div>
<div class="a" style="left:1608px;top:287px;border:4px solid transparent;border-left:5px solid #e4e4e4;border-right:none"></div>
<div class="a" style="left:1608px;top:307px;border:4px solid transparent;border-left:5px solid #e4e4e4;border-right:none"></div>
<div class="a" style="left:1538px;top:599px;width:184px;height:30px;background:#f1f0b4"></div>
<div class="t" style="left:1538px;width:184px;text-align:center;top:601px;font-size:11.5px;letter-spacing:-0.3px;color:#000">Save item preset from selected item.</div>
<div class="t" style="left:1538px;width:184px;text-align:center;top:616px;font-size:9.5px;letter-spacing:-0.15px;color:#4a4a4a">press F1 for more</div>
</body></html>
